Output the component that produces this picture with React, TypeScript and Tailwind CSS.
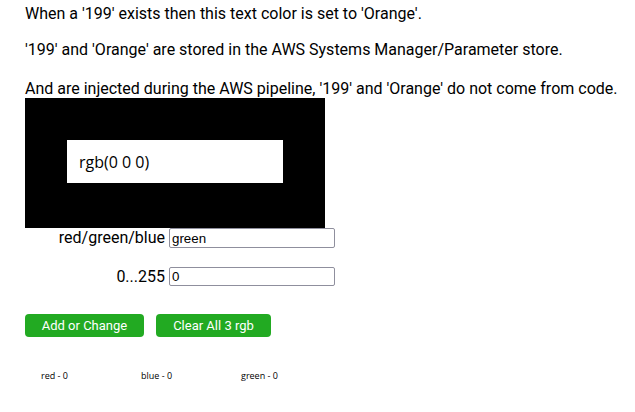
export default function App() {
  return (
    <div className="w-[635px] h-[412px] bg-white text-black overflow-hidden" style={{ fontFamily: "Roboto, sans-serif" }}>
      <div className="pl-[25px]">
        <p className="pt-[4px] text-[16px] leading-[19px] whitespace-nowrap">When a '199' exists then this text color is set to 'Orange'.</p>
        <p className="mt-[17px] text-[16px] leading-[19px] whitespace-nowrap">'199' and 'Orange' are stored in the AWS Systems Manager/Parameter store.</p>
        <p className="mt-[20px] text-[16px] leading-[19px] whitespace-nowrap">And are injected during the AWS pipeline, '199' and 'Orange' do not come from code.</p>
        <div className="w-[300px] h-[130px] bg-black pt-[42px] pl-[42px]">
          <div className="w-[216px] h-[43px] bg-white flex items-center pl-[12px] text-[16px]" style={{ fontFamily: "'Open Sans', sans-serif" }}>
            rgb(0 0 0)
          </div>
        </div>
        <div className="flex items-center h-[20px]">
          <label className="w-[144px] text-right text-[16px] leading-[20px] pr-[4px]">red/green/blue</label>
          <input
            readOnly
            value="green"
            className="w-[166px] h-[20px] border border-[#8f8f9d] rounded-[2px] px-[2px] text-[13.33px] outline-none"
            style={{ fontFamily: "'Liberation Sans', Arial, sans-serif" }}
          />
        </div>
        <div className="flex items-center h-[19px] mt-[19px]">
          <label className="w-[144px] text-right text-[16px] leading-[19px] pr-[4px]">0...255</label>
          <input
            readOnly
            value="0"
            className="w-[166px] h-[19px] border border-[#8f8f9d] rounded-[2px] px-[2px] text-[13.33px] outline-none"
            style={{ fontFamily: "'Liberation Sans', Arial, sans-serif" }}
          />
        </div>
        <div className="flex mt-[28px] gap-[12px]">
          <button className="w-[119px] h-[23px] rounded-[4px] bg-[#22aa22] text-white text-[13px] font-normal flex items-center justify-center">Add or Change</button>
          <button className="w-[115px] h-[23px] rounded-[4px] bg-[#22aa22] text-white text-[13px] font-normal flex items-center justify-center">Clear All 3 rgb</button>
        </div>
        <div className="flex mt-[33px] pl-[16px] text-[9px] leading-[12px]" style={{ fontFamily: "'Open Sans', sans-serif" }}>
          <span className="w-[100px]">red - 0</span>
          <span className="w-[100px]">blue - 0</span>
          <span className="w-[100px]">green - 0</span>
        </div>
      </div>
    </div>
  );
}
